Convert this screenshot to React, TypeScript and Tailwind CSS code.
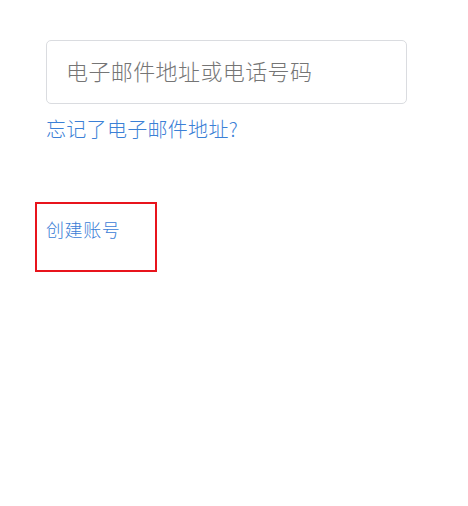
export default function App() {
  return (
    <div
      className="min-h-[506px] w-[468px] bg-white pl-[46px] pt-[40px] font-light"
      style={{ fontFamily: '"Noto Sans CJK SC", "Noto Sans", sans-serif' }}
    >
      <div className="flex h-[64px] w-[361px] items-center rounded-[5px] border border-[#dadce0] px-[19px] pb-[4px]">
        <span className="text-[22px] leading-none tracking-[0.4px] text-[#757575]">电子邮件地址或电话号码</span>
      </div>

      <div className="mt-[13px] text-[20px] leading-[24px] tracking-[0.3px] text-[#3b80d6]">忘记了电子邮件地址?</div>

      <div className="relative mt-[61px] h-[70px] w-[122px] -ml-[11px]">
        <div className="absolute inset-0 border-2 border-[#e8141c]" />
        <div className="pl-[11px] pt-[16px] text-[18px] leading-[22px] tracking-[0.6px] text-[#3b80d6]">创建账号</div>
      </div>
    </div>
  );
}
